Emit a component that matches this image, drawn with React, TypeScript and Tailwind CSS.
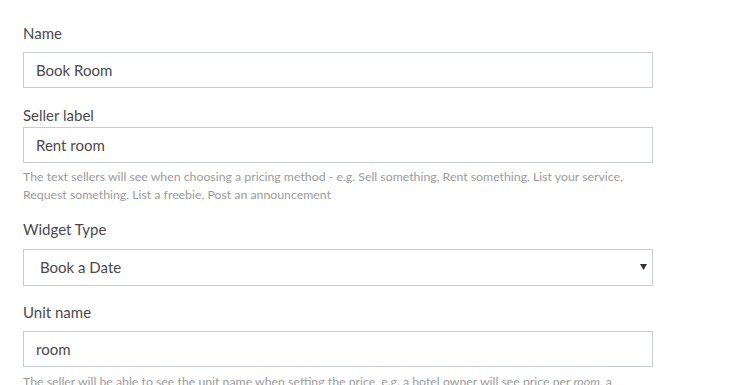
const labelCls = "block text-[15px] leading-[22px] text-[#4a4a4a]";
const inputCls =
  "w-full h-[36px] border border-[#c8cdd5] bg-white px-[12px] text-[15px] text-[#4a4a4a] outline-none";
const helpCls = "text-[12.3px] leading-[18px] text-[#9b9b9b]";

export default function App() {
  return (
    <div
      className="min-h-screen bg-white pl-[23px] pt-[22px]"
      style={{ fontFamily: "Lato, 'Open Sans', sans-serif" }}
    >
      <div className="w-[630px]">
        {/* Name */}
        <label className={labelCls}>Name</label>
        <input className={`${inputCls} mt-[8px]`} defaultValue="Book Room" />

        {/* Seller label */}
        <label className={`${labelCls} mt-[16px]`}>Seller label</label>
        <input className={`${inputCls} mt-[1px]`} defaultValue="Rent room" />
        <p className={`${helpCls} mt-[5px]`}>
          The text sellers will see when choosing a pricing method - e.g. Sell something, Rent
          something, List your service,
          <br />
          Request something, List a freebie, Post an announcement
        </p>

        {/* Widget Type */}
        <label className={`${labelCls} mt-[14px]`}>Widget Type</label>
        <div className="relative mt-[9px]">
          <div className="flex h-[37px] items-center border border-[#c8cdd5] bg-white pl-[16px] text-[15px] text-[#4a4a4a]">
            Book a Date
          </div>
          <svg
            className="absolute right-[6px] top-[15px]"
            width="7"
            height="6"
            viewBox="0 0 7 6"
          >
            <path d="M0 0h7L3.5 6z" fill="#333" />
          </svg>
        </div>

        {/* Unit name */}
        <label className={`${labelCls} mt-[15px]`}>Unit name</label>
        <input className={`${inputCls} mt-[8px]`} defaultValue="room" />
        <p className={`${helpCls} mt-[6px]`}>
          The seller will be able to see the unit name when setting the price, e.g. a hotel owner
          will see price per <em>room</em>, a
        </p>
      </div>
    </div>
  );
}
